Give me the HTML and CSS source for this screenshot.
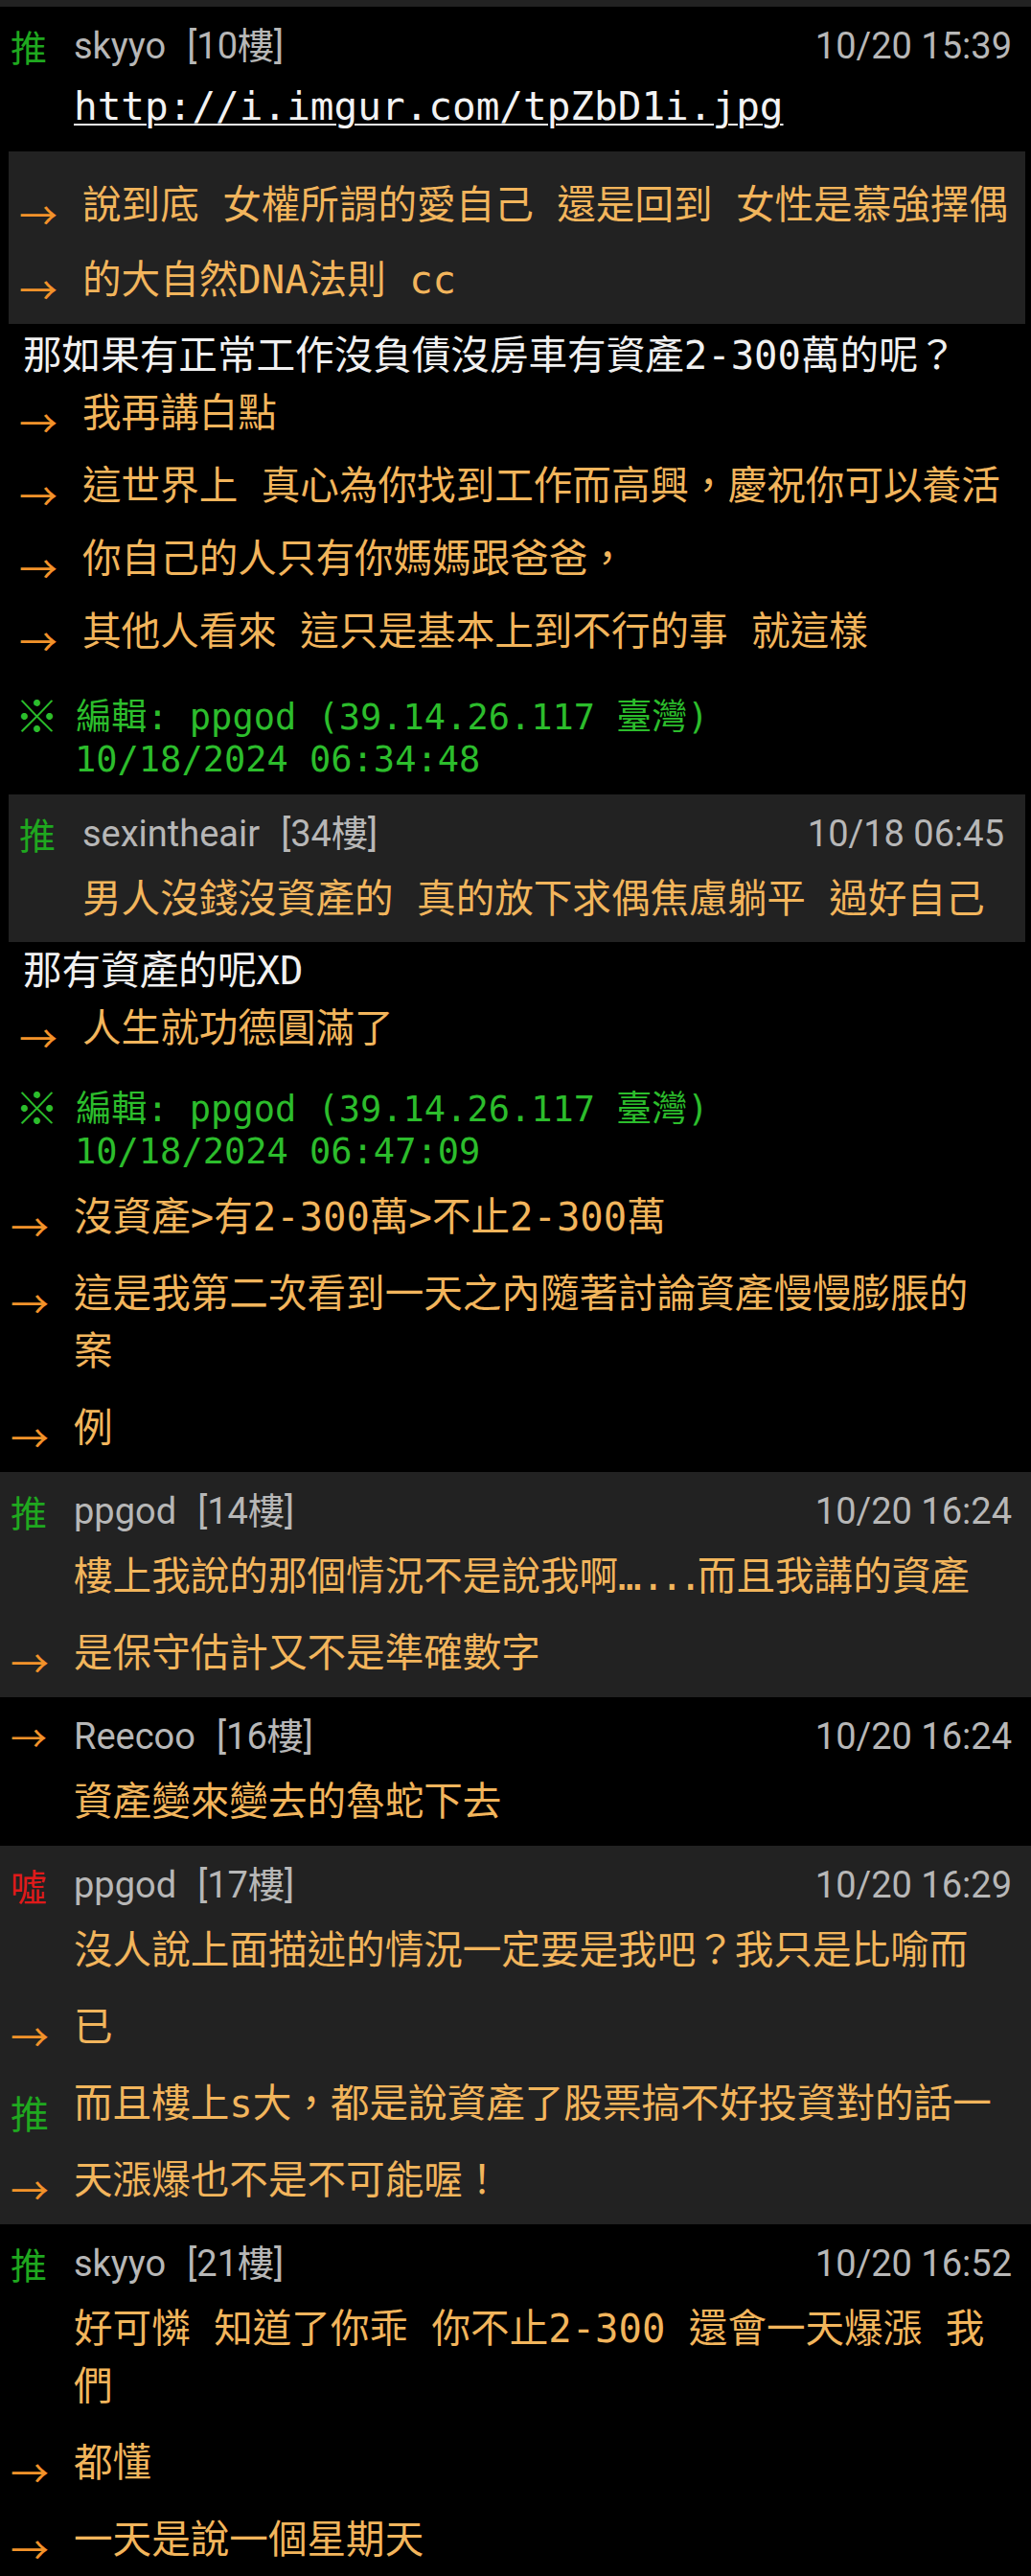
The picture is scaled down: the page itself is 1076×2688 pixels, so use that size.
FILE: index.html
```html
<!DOCTYPE html>
<html lang="zh-Hant">
<head>
<meta charset="utf-8">
<title>PTT 推文</title>
<link rel="stylesheet" href="styles.css">
</head>
<body>
<div class="page">
  <div class="strip"></div>

  <section class="floor">
    <div class="head"><span class="tag push">推</span><span class="name">skyyo</span><span class="no">[10樓]</span><span class="time">10/20 15:39</span></div>
    <div class="urlrow"><span class="tag"></span><span class="url">http://i.imgur.com/tpZbD1i.jpg</span></div>

    <div class="nest">
      <div class="quote q1">
        <div class="row"><span class="tag arrow">→</span><span class="txt">說到底 女權所謂的愛自己 還是回到 女性是慕強擇偶</span></div>
        <div class="row"><span class="tag arrow">→</span><span class="txt">的大自然DNA法則 cc</span></div>
      </div>
      <p class="plain first">那如果有正常工作沒負債沒房車有資產2-300萬的呢？</p>
      <div class="row"><span class="tag arrow">→</span><span class="txt">我再講白點</span></div>
      <div class="row"><span class="tag arrow">→</span><span class="txt">這世界上 真心為你找到工作而高興，慶祝你可以養活</span></div>
      <div class="row"><span class="tag arrow">→</span><span class="txt">你自己的人只有你媽媽跟爸爸，</span></div>
      <div class="row"><span class="tag arrow">→</span><span class="txt">其他人看來 這只是基本上到不行的事 就這樣</span></div>
      <div class="edit e1"><div class="l1"><span class="mark">※</span> 編輯: ppgod (39.14.26.117 臺灣)</div><div class="d2">10/18/2024 06:34:48</div></div>

      <div class="quote q2">
        <div class="head"><span class="tag push">推</span><span class="name">sexintheair</span><span class="no">[34樓]</span><span class="time">10/18 06:45</span></div>
        <div class="row"><span class="tag"></span><span class="txt">男人沒錢沒資產的 真的放下求偶焦慮躺平 過好自己</span></div>
      </div>
      <p class="plain">那有資產的呢XD</p>
      <div class="row"><span class="tag arrow">→</span><span class="txt">人生就功德圓滿了</span></div>
      <div class="edit e2"><div class="l1"><span class="mark">※</span> 編輯: ppgod (39.14.26.117 臺灣)</div><div class="d2">10/18/2024 06:47:09</div></div>
    </div>

    <div class="row"><span class="tag arrow">→</span><span class="txt">沒資產&gt;有2-300萬&gt;不止2-300萬</span></div>
    <div class="row"><span class="tag arrow">→</span><span class="txt">這是我第二次看到一天之內隨著討論資產慢慢膨脹的<br>案</span></div>
    <div class="row"><span class="tag arrow">→</span><span class="txt">例</span></div>
  </section>

  <section class="floor alt">
    <div class="head"><span class="tag push">推</span><span class="name">ppgod</span><span class="no">[14樓]</span><span class="time">10/20 16:24</span></div>
    <div class="row"><span class="tag"></span><span class="txt">樓上我說的那個情況不是說我啊…<span class="dots">...</span>而且我講的資產</span></div>
    <div class="row"><span class="tag arrow">→</span><span class="txt">是保守估計又不是準確數字</span></div>
  </section>

  <section class="floor">
    <div class="head"><span class="tag arrow">→</span><span class="name">Reecoo</span><span class="no">[16樓]</span><span class="time">10/20 16:24</span></div>
    <div class="row"><span class="tag"></span><span class="txt">資產變來變去的魯蛇下去</span></div>
  </section>

  <section class="floor alt">
    <div class="head"><span class="tag boo">噓</span><span class="name">ppgod</span><span class="no">[17樓]</span><span class="time">10/20 16:29</span></div>
    <div class="row"><span class="tag"></span><span class="txt">沒人說上面描述的情況一定要是我吧？我只是比喻而</span></div>
    <div class="row"><span class="tag arrow">→</span><span class="txt">已</span></div>
    <div class="row"><span class="tag push">推</span><span class="txt">而且樓上s大，都是說資產了股票搞不好投資對的話一</span></div>
    <div class="row"><span class="tag arrow">→</span><span class="txt">天漲爆也不是不可能喔！</span></div>
  </section>

  <section class="floor">
    <div class="head"><span class="tag push">推</span><span class="name">skyyo</span><span class="no">[21樓]</span><span class="time">10/20 16:52</span></div>
    <div class="row"><span class="tag"></span><span class="txt">好可憐 知道了你乖 你不止2-300 還會一天爆漲 我<br>們</span></div>
    <div class="row"><span class="tag arrow">→</span><span class="txt">都懂</span></div>
    <div class="row"><span class="tag arrow">→</span><span class="txt">一天是說一個星期天</span></div>
  </section>
</div>
</body>
</html>
```

FILE: styles.css
```css
html, body {
  margin: 0;
  padding: 0;
  background: #000;
}

.page {
  width: 1076px;
  min-height: 2688px;
  background: #000;
  font-family: "DejaVu Sans Mono", "Noto Sans CJK TC", monospace;
}

.strip {
  height: 7px;
  background: #222;
}

.floor {
  padding: 13px 0 6px;
  background: #000;
}

.floor.alt {
  background: #222;
}

/* header line: tag, author, floor, time */
.head {
  display: flex;
  align-items: flex-start;
  height: 56px;
  padding-right: 20px;
  font-family: Roboto, "Noto Sans CJK TC", sans-serif;
  font-size: 38px;
  line-height: 56px;
  color: #b7b7b7;
}

.head .tag {
  height: 56px;
  padding-top: 0;
  font-size: 38px;
  line-height: 56px;
}

.no {
  margin-left: 22px;
}

.time {
  margin-left: auto;
}

.tag {
  flex: none;
  box-sizing: border-box;
  width: 77px;
  height: 60px;
  padding-left: 11px;
  padding-top: 18px;
  font-family: "Noto Sans CJK TC", sans-serif;
  font-size: 40px;
  line-height: 42px;
}

.push { color: #1fa81f; }
.boo { color: #e01a1a; }
.arrow { color: #f2922a; }

.row {
  display: flex;
  align-items: flex-start;
  padding: 10px 0;
}

.txt {
  flex: 1;
  min-width: 0;
  font-size: 40.6px;
  line-height: 60px;
  color: #f2b55c;
}

.dots {
  letter-spacing: -5px;
}

/* link row */
.urlrow {
  display: flex;
  padding-top: 5px;
}

.urlrow .tag {
  height: 60px;
}

.url {
  font-size: 41px;
  line-height: 60px;
  color: #f2f2f2;
  text-decoration: underline;
  text-decoration-thickness: 2px;
  text-underline-offset: 4px;
}

/* nested (quoted) section */
.nest {
  margin: 0 6px 6px 9px;
}

.nest > .row {
  padding: 0 0 16px;
}

.quote {
  background: #222;
}

.q1 {
  margin-top: 17px;
  padding: 17px 0 7px;
}

.q1 .row {
  padding: 9px 0;
}

.q2 {
  margin-top: 14px;
  padding: 13px 0 5px;
}

.q2 .head {
  padding-right: 22px;
}

.plain {
  margin: 0;
  padding-left: 15px;
  font-size: 40.6px;
  line-height: 60px;
  color: #f0f0f0;
}

.plain.first {
  margin-top: 3px;
}

.edit {
  padding-left: 15px;
  font-size: 37px;
  line-height: 44px;
  color: #2cbd2c;
}

.edit .l1 {
  height: 44px;
  white-space: nowrap;
}

.mark {
  font-family: "Noto Sans CJK TC", sans-serif;
  font-size: 46px;
  line-height: 30px;
  margin: 0 -4.5px 0 -8.5px;
  vertical-align: -3px;
}

.edit .d2 {
  padding-left: 54px;
}

.e1 {
  margin-top: 22px;
}

.e2 {
  margin-top: 17px;
}
```
